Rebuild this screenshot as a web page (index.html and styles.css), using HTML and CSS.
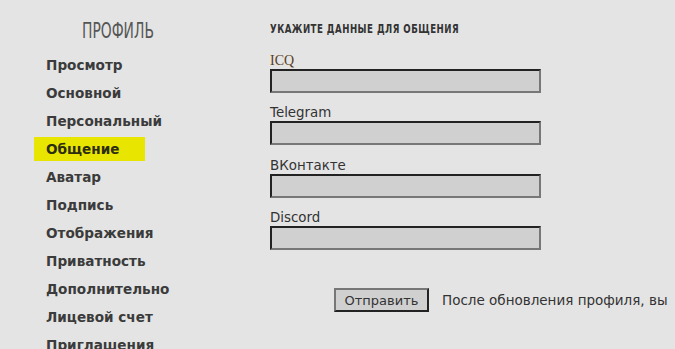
FILE: index.html
```html
<!DOCTYPE html>
<html lang="ru">
<head>
<meta charset="utf-8">
<link rel="stylesheet" href="styles.css">
</head>
<body>
<div class="page">
  <aside class="side">
    <h2 class="side-title">ПРОФИЛЬ</h2>
    <ul class="menu">
      <li><a class="menu-link">Просмотр</a></li>
      <li><a class="menu-link">Основной</a></li>
      <li><a class="menu-link">Персональный</a></li>
      <li><a class="menu-link active">Общение</a></li>
      <li><a class="menu-link">Аватар</a></li>
      <li><a class="menu-link">Подпись</a></li>
      <li><a class="menu-link">Отображения</a></li>
      <li><a class="menu-link">Приватность</a></li>
      <li><a class="menu-link">Дополнительно</a></li>
      <li><a class="menu-link">Лицевой счет</a></li>
      <li><a class="menu-link">Приглашения</a></li>
    </ul>
  </aside>
  <main class="main">
    <h3 class="main-title">УКАЖИТЕ ДАННЫЕ ДЛЯ ОБЩЕНИЯ</h3>
    <form class="form">
      <div class="field"><label class="label serif">ICQ</label><input class="input" type="text"></div>
      <div class="field"><label class="label">Telegram</label><input class="input" type="text"></div>
      <div class="field"><label class="label">ВКонтакте</label><input class="input" type="text"></div>
      <div class="field"><label class="label">Discord</label><input class="input" type="text"></div>
      <div class="actions">
        <button class="btn" type="button">Отправить</button>
        <span class="note">После обновления профиля, вы</span>
      </div>
    </form>
  </main>
</div>
</body>
</html>
```
FILE: styles.css
```css
html, body {
  margin: 0;
  padding: 0;
  background: #e4e4e4;
  overflow: hidden;
}
body {
  font-family: "DejaVu Sans", Verdana, sans-serif;
  color: #333;
  width: 675px;
  height: 349px;
}
.page {
  display: flex;
  white-space: nowrap;
}
.side {
  width: 225px;
  flex: none;
}
.side-title {
  margin: 0;
  padding-top: 19px;
  padding-left: 82px;
  font-family: "DejaVu Sans Condensed", sans-serif;
  font-weight: 300;
  font-size: 22px;
  color: #555;
  line-height: 24px;
  height: 24px;
  transform: scaleX(0.7);
  transform-origin: 82px 0;
}
.menu {
  list-style: none;
  margin: 8px 0 0 0;
  padding: 0;
}
.menu li {
  height: 28px;
  display: flex;
  align-items: center;
}
.menu-link {
  font-weight: bold;
  font-size: 13.6px;
  color: #3b3b3b;
  padding: 0 0 0 46px;
}
.menu-link.active {
  background: #e8e600;
  margin-left: 34px;
  padding: 4px 26px 4px 12px;
  color: #2d2d10;
}
.main {
  padding-left: 45px;
}
.main-title {
  margin: 0;
  padding-top: 23px;
  font-family: "DejaVu Sans Condensed", sans-serif;
  font-weight: bold;
  font-size: 12px;
  line-height: 12px;
  letter-spacing: 0.6px;
  color: #333;
  transform: scaleX(0.8);
  transform-origin: 0 0;
}
.form {
  margin-top: 18px;
  display: flex;
  flex-direction: column;
}
.field {
  display: flex;
  flex-direction: column;
  margin-bottom: 12.3px;
}
.label {
  font-size: 13.4px;
  line-height: 16px;
  color: #333;
}
.label.serif {
  font-family: "Liberation Serif", serif;
  font-size: 14px;
  color: #5a4020;
}
.input {
  box-sizing: border-box;
  width: 271px;
  height: 24px;
  margin: 0;
  background: #d0d0d0;
  border: 2px solid;
  border-color: #222 #777 #777 #222;
}
.actions {
  display: flex;
  align-items: center;
  margin-top: 26px;
  padding-left: 64px;
}
.btn {
  box-sizing: border-box;
  width: 95px;
  height: 24px;
  font-family: "DejaVu Sans", sans-serif;
  font-size: 13px;
  color: #333;
  background: #d0d0d0;
  border: 2px solid;
  border-color: #777 #222 #222 #777;
  padding: 0;
}
.note {
  margin-left: 13px;
  font-size: 13.5px;
  color: #333;
}
```
